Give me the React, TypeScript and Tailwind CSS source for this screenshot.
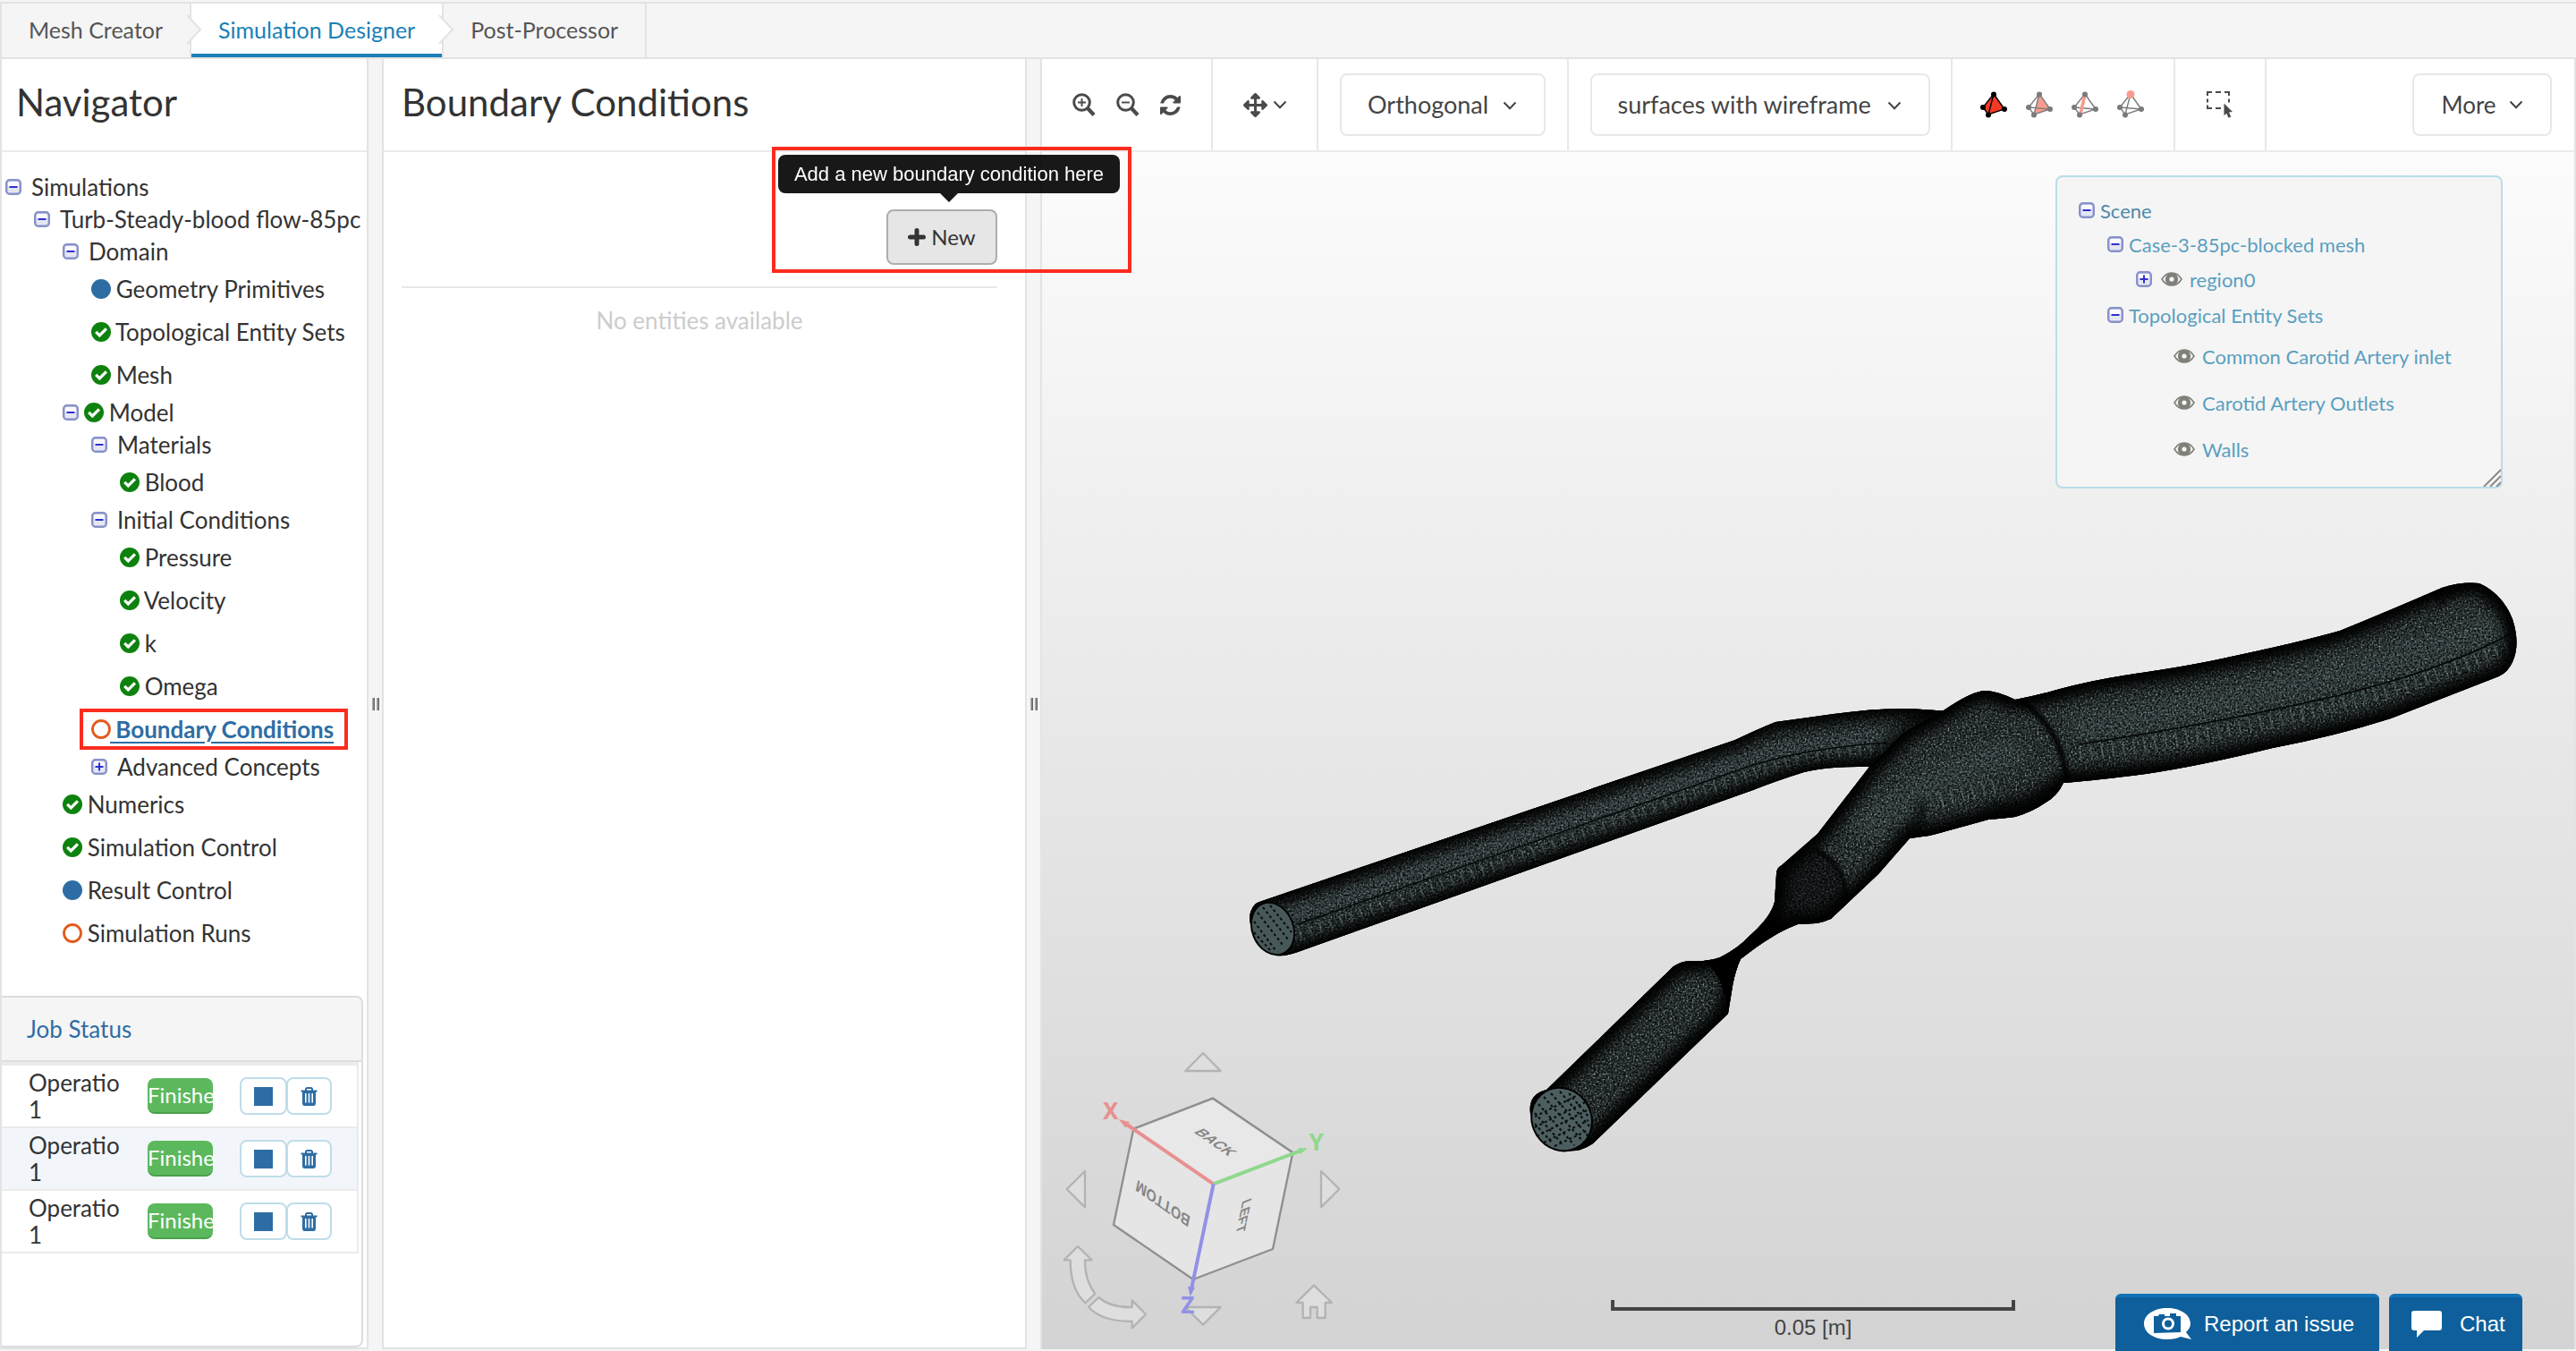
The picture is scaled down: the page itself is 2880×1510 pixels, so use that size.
import type { ReactNode } from "react";
import { FaArrowsAlt } from "react-icons/fa";

type Status = "ok" | "filled" | "open";
type Depth = 0 | 1 | 2 | 3 | 4;
type Node = { label: string; depth: Depth; toggle?: "minus" | "plus"; status?: Status; active?: boolean };

const tree: Node[] = [
  { label: "Simulations", depth: 0, toggle: "minus" },
  { label: "Turb-Steady-blood flow-85pc", depth: 1, toggle: "minus" },
  { label: "Domain", depth: 2, toggle: "minus" },
  { label: "Geometry Primitives", depth: 3, status: "filled" },
  { label: "Topological Entity Sets", depth: 3, status: "ok" },
  { label: "Mesh", depth: 3, status: "ok" },
  { label: "Model", depth: 2, toggle: "minus", status: "ok" },
  { label: "Materials", depth: 3, toggle: "minus" },
  { label: "Blood", depth: 4, status: "ok" },
  { label: "Initial Conditions", depth: 3, toggle: "minus" },
  { label: "Pressure", depth: 4, status: "ok" },
  { label: "Velocity", depth: 4, status: "ok" },
  { label: "k", depth: 4, status: "ok" },
  { label: "Omega", depth: 4, status: "ok" },
  { label: "Boundary Conditions", depth: 3, status: "open", active: true },
  { label: "Advanced Concepts", depth: 3, toggle: "plus" },
  { label: "Numerics", depth: 2, status: "ok" },
  { label: "Simulation Control", depth: 2, status: "ok" },
  { label: "Result Control", depth: 2, status: "filled" },
  { label: "Simulation Runs", depth: 2, status: "open" },
];

const indent: Record<Depth, string> = {
  0: "pl-1",
  1: "pl-9",
  2: "pl-[68px]",
  3: "pl-[100px]",
  4: "pl-[132px]",
};

function ToggleBox({ kind, label }: { kind: "minus" | "plus"; label: string }) {
  return (
    <button type="button" aria-label={(kind === "minus" ? "Collapse " : "Expand ") + label} className="block shrink-0">
      <svg width="18" height="18" viewBox="0 0 18 18" aria-hidden="true">
        <rect x="1.200" y="1.200" width="15.600" height="15.600" rx="3.500" fill="#e4e6f2" stroke="#8791c9" strokeWidth="2.400" />
        <rect x="3" y="3" width="12" height="6" rx="2" fill="#fafaff" />
        <path d={kind === "minus" ? "M4.5 9h9" : "M4.5 9h9M9 4.5v9"} stroke="#2f2fd0" strokeWidth="2" />
      </svg>
    </button>
  );
}

function StatusIcon({ status }: { status: Status }) {
  return (
    <svg width="22" height="22" viewBox="0 0 22 22" className="-mr-px shrink-0" aria-hidden="true">
      {status === "open" && <circle cx="11" cy="11" r="9.5" fill="#fff" stroke="#e25a1c" strokeWidth="2.8" />}
      {status === "filled" && <circle cx="11" cy="11" r="11" fill="#2e6da4" />}
      {status === "ok" && (
        <>
          <circle cx="11" cy="11" r="11" fill="#0e820e" />
          <path d="M5.2 10.8l4.1 4.1 7.6-7.6" fill="none" stroke="#fff" strokeWidth="3.2" />
        </>
      )}
    </svg>
  );
}

function TreeRow({ node }: { node: Node }) {
  const leaf = !node.toggle;
  return (
    <li
      className={
        "relative flex items-center whitespace-nowrap text-[26px] " + indent[node.depth] + (leaf ? " h-12" : " h-9")
      }
    >
      {node.toggle && <ToggleBox kind={node.toggle} label={node.label} />}
      {node.toggle && <span className={node.status ? "w-1.5" : "w-[11px]"} />}
      {node.status && <StatusIcon status={node.status} />}
      <a
        href="#"
        className={
          node.active
            ? "whitespace-pre font-bold text-[#2e6da4] underline decoration-2 underline-offset-4"
            : node.status
              ? "whitespace-pre text-[#333]"
              : "text-[#333]"
        }
      >
        {node.status ? " " + node.label : node.label}
      </a>
      {node.active && <span className="pointer-events-none absolute inset-y-px left-[87px] w-[300px] border-4 border-[#fb2c1d]" />}
    </li>
  );
}

function TabArrow({ fill }: { fill: string }) {
  return (
    <svg width="18" height="34" viewBox="0 0 18 34" className="absolute -right-3.5 top-3 z-10" aria-hidden="true">
      <path d="M1 1L16 17 1 33" fill={fill} stroke="#e3e3e3" strokeWidth="2" />
    </svg>
  );
}

function Tabs() {
  return (
    <nav className="flex h-16 border-y-2 border-l-2 border-[#e3e3e3] bg-[#f5f5f5] text-[25px] text-[#555]">
      <a href="#" className="relative flex items-center border-r-2 border-[#e3e3e3] px-[30px]">
        Mesh Creator
        <TabArrow fill="#f5f5f5" />
      </a>
      <a href="#" className="relative flex items-center border-r-2 border-[#e3e3e3] bg-white px-[30px] text-[#1a80b6]">
        Simulation Designer
        <span className="absolute inset-x-0 bottom-0 h-1 bg-[#1a80b6]" />
        <TabArrow fill="#fff" />
      </a>
      <a href="#" className="flex items-center border-r-2 border-[#e3e3e3] px-[30px]">
        Post-Processor
      </a>
    </nav>
  );
}

function TrashIcon() {
  return (
    <svg width="19" height="21" viewBox="0 0 19 21" aria-hidden="true">
      <path
        d="M6 4V2.6C6 1.7 6.7 1 7.6 1h3.8c.9 0 1.6.7 1.6 1.6V4"
        fill="none"
        stroke="#2e6da4"
        strokeWidth="2"
      />
      <path
        fillRule="evenodd"
        d="M.5 3.4h18v2H17V18c0 1.700-1 3-2.300 3H4.300C3 21 2 19.700 2 18V5.400H.5zM5 7v10.500h1.600V7zm3.700 0v10.500h1.600V7zm3.700 0v10.500H14V7z"
        fill="#2e6da4"
      />
    </svg>
  );
}

function JobStatus() {
  return (
    <section className="mr-1 h-[393px] rounded-r-lg border-2 border-l-0 border-[#ddd] bg-white">
      <h2 className="flex h-[70px] items-center rounded-tr-md bg-[#f5f5f5] pl-7 text-[26px]">
        <a href="#" className="text-[#2e6da4]">
          Job Status
        </a>
      </h2>
      <div className="border-t-2 border-[#ddd] pr-[3px]">
        <table className="w-full border-separate border-spacing-0 border-r-2 border-t-4 border-[#ebebeb] text-[26px] leading-[30px] text-[#333]">
          <tbody>
            {[1, 2, 3].map((n) => (
              <tr key={n} className={n === 2 ? "bg-[#f2f6fb]" : "bg-white"}>
                <td className="h-[70px] w-[163px] border-b-2 border-[#ebebeb] pl-[30px]">
                  Operatio
                  <br />1
                </td>
                <td className="w-[103px] border-b-2 border-[#ebebeb]">
                  <span className="flex h-10 w-[73px] items-center rounded-lg border-b-2 border-[#4ba04b] bg-[#5cb85c] text-2xl text-white">
                    Finishe
                  </span>
                </td>
                <td className="border-b-2 border-[#ebebeb]">
                  <div className="flex">
                    <button
                      type="button"
                      aria-label="Stop job"
                      className="flex h-[42px] w-[53px] items-center justify-center rounded-lg border-2 border-[#bfdde9] bg-white"
                    >
                      <span className="h-[21px] w-[21px] bg-[#2e6da4]" />
                    </button>
                    <button
                      type="button"
                      aria-label="Delete job"
                      className="-ml-px flex h-[42px] w-[51px] items-center justify-center rounded-lg border-2 border-[#bfdde9] bg-white"
                    >
                      <TrashIcon />
                    </button>
                  </div>
                </td>
              </tr>
            ))}
          </tbody>
        </table>
      </div>
    </section>
  );
}

function Navigator() {
  return (
    <aside className="flex w-[412px] shrink-0 flex-col border-x-2 border-b-2 border-[#e3e3e3] bg-white">
      <h1 className="flex h-[104px] items-center border-b-2 border-[#ebebeb] pb-1.5 pl-4 text-[42px] text-[#333]">Navigator</h1>
      <ul className="flex-1 pt-[21px]">
        {tree.map((node) => (
          <TreeRow key={node.label} node={node} />
        ))}
      </ul>
      <JobStatus />
    </aside>
  );
}

function Splitter() {
  return (
    <div className="flex w-[15px] shrink-0 items-center justify-center gap-0.5 bg-[#f5f5f5]">
      <span className="h-3.5 w-[3px] bg-linear-to-r from-[#bbb] to-[#555]" />
      <span className="h-3.5 w-[3px] bg-linear-to-r from-[#bbb] to-[#555]" />
    </div>
  );
}

function BoundaryPanel() {
  return (
    <section className="w-[721px] shrink-0 border-x-2 border-b-2 border-[#e3e3e3] bg-white text-[#333]">
      <h1 className="flex h-[104px] items-center border-b-2 border-[#ebebeb] pb-1.5 pl-5 text-[42px]">Boundary Conditions</h1>
      <div className="pl-5 pr-[31px]">
        <div className="flex h-[152px] items-end justify-end border-b-2 border-[#e8e8e8] pb-6">
          <div className="relative">
            <button
              type="button"
              aria-describedby="new-tip"
              className="flex h-[62px] w-[124px] items-center justify-center gap-1.5 rounded-lg border-2 border-[#adadad] bg-[#e6e6e6] text-2xl"
            >
              <svg width="20" height="20" viewBox="0 0 20 20" aria-hidden="true">
                <path d="M10 2.500v15M2.500 10h15" stroke="#333" strokeWidth="5" strokeLinecap="round" />
              </svg>
              New
            </button>
            <div className="absolute bottom-[70px] -left-[121px] z-20 flex flex-col items-center opacity-90">
              <div
                id="new-tip"
                role="tooltip"
                className="flex h-[43px] w-[382px] items-center justify-center whitespace-nowrap rounded-lg bg-black font-['Liberation_Sans',Arial,sans-serif] text-[22px] text-white"
              >
                Add a new boundary condition here
              </div>
              <span className="h-0 w-0 border-x-10 border-t-10 border-x-transparent border-t-black" />
            </div>
            <span className="pointer-events-none absolute -left-[128px] -top-[70px] z-30 h-[141px] w-[402px] border-4 border-[#fb2c1d]" />
          </div>
        </div>
        <p className="pt-4 text-center text-[26px] leading-10 text-[#ccc]">No entities available</p>
      </div>
    </section>
  );
}

function Chevron() {
  return (
    <svg width="16" height="10" viewBox="0 0 16 10" aria-hidden="true" className="shrink-0">
      <path d="M1.500 1.500L8 8.200 14.500 1.500" fill="none" stroke="#444" strokeWidth="2" />
    </svg>
  );
}

function Magnifier({ plus }: { plus: boolean }) {
  return (
    <svg width="26" height="26" viewBox="0 0 26 26" aria-hidden="true">
      <circle cx="10.500" cy="10.500" r="8.800" fill="none" stroke="#4a4a4a" strokeWidth="3" />
      <path d="M17 17l7 7.500" stroke="#4a4a4a" strokeWidth="4.200" />
      <path d={plus ? "M6 10.500h9M10.500 6v9" : "M6 10.500h9"} stroke="#4a4a4a" strokeWidth="1.900" />
    </svg>
  );
}

function RefreshIcon() {
  return (
    <svg width="23" height="23" viewBox="0 0 1536 1536" aria-hidden="true" fill="#4a4a4a">
      <path d="M1511 928q0 5-1 7-64 268-268 434.500t-478 166.500q-146 0-282.500-55t-243.500-157l-129 129q-19 19-45 19t-45-19-19-45v-448q0-26 19-45t45-19h448q26 0 45 19t19 45-19 45l-137 137q71 66 161 102t187 36q134 0 250-65t186-179q11-17 53-117 8-23 30-23h192q13 0 22.500 9.500t9.500 22.500zm25-800v448q0 26-19 45t-45 19h-448q-26 0-45-19t-19-45 19-45l138-138q-148-137-349-137-134 0-250 65t-186 179q-11 17-53 117-8 23-30 23h-199q-13 0-22.500-9.500t-9.500-22.500v-7q65-268 270-434.500t480-166.500q146 0 284 55.500t245 156.500l130-129q19-19 45-19t45 19 19 45z" />
    </svg>
  );
}

function Tetra({ mode }: { mode: "volume" | "face" | "edge" | "node" }) {
  const dot = mode === "volume" ? "#000" : "#7a7a7a";
  return (
    <svg width="31" height="32" viewBox="0 0 31 32" aria-hidden="true">
      {mode === "volume" && <path d="M15 4L3 19l6 8 18-6z" fill="#f23a25" />}
      {mode === "face" && <path d="M15 4L9 27l18-6z" fill="#f99b90" />}
      <path
        d={mode === "volume" ? "M15 4L3 19l6 8 18-6zM15 4L9 27" : "M15 4L3 19l6 8 18-6zM15 4L9 27M3 19l24 2"}
        fill="none"
        stroke={dot}
        strokeWidth="1.400"
      />
      {mode === "edge" && <path d="M15 5L10 26" stroke="#f99b90" strokeWidth="3.600" />}
      <circle cx="3" cy="19" r="3" fill={dot} />
      <circle cx="9" cy="27.500" r="3" fill={dot} />
      <circle cx="27" cy="21" r="3" fill={dot} />
      <circle cx="15" cy="4.500" r={mode === "node" ? 4.5 : 3} fill={mode === "node" ? "#f99b90" : dot} />
    </svg>
  );
}

function Dropdown({ label, value, width }: { label: string; value: string; width: string }) {
  return (
    <div className={"relative " + width}>
      <select
        aria-label={label}
        className="h-[70px] w-full appearance-none rounded-lg border-2 border-[#e8e8e8] bg-white pl-[29px] text-[27px] text-[#444]"
      >
        <option>{value}</option>
      </select>
      <span className="pointer-events-none absolute right-8 top-[31px]">
        <Chevron />
      </span>
    </div>
  );
}

function Cell({ children, className }: { children: ReactNode; className: string }) {
  return <div className={"flex items-center border-r-2 border-[#e8e8e8] " + className}>{children}</div>;
}

function Toolbar() {
  return (
    <div className="flex h-[104px] border-b-2 border-[#ebebeb] bg-white">
      <Cell className="w-[191px] gap-[23px] pl-[34px]">
        <button type="button" aria-label="Zoom in">
          <Magnifier plus />
        </button>
        <button type="button" aria-label="Zoom out">
          <Magnifier plus={false} />
        </button>
        <button type="button" aria-label="Reset view">
          <RefreshIcon />
        </button>
      </Cell>
      <Cell className="w-[118px] justify-center">
        <button type="button" aria-label="Move" className="flex items-center gap-1.5">
          <FaArrowsAlt size={27} color="#4a4a4a" />
          <Chevron />
        </button>
      </Cell>
      <Cell className="w-[280px] justify-center">
        <Dropdown label="Projection" value="Orthogonal" width="w-[230px]" />
      </Cell>
      <Cell className="w-[429px] justify-center">
        <Dropdown label="Render mode" value="surfaces with wireframe" width="w-[380px]" />
      </Cell>
      <Cell className="w-[249px] gap-5 pl-[31px]">
        <button type="button" aria-label="Pick volumes">
          <Tetra mode="volume" />
        </button>
        <button type="button" aria-label="Pick faces">
          <Tetra mode="face" />
        </button>
        <button type="button" aria-label="Pick edges">
          <Tetra mode="edge" />
        </button>
        <button type="button" aria-label="Pick nodes">
          <Tetra mode="node" />
        </button>
      </Cell>
      <Cell className="w-[102px] justify-center">
        <button type="button" aria-label="Box select">
          <svg width="30" height="30" viewBox="0 0 30 30" aria-hidden="true">
            <path
              d="M1 5V1h5M10 1h6M20 1h5v4M1 8.500v4M25 8.500v4M1 15.500V19h5M10 19h6"
              fill="none"
              stroke="#4a4a4a"
              strokeWidth="2"
            />
            <path d="M19.500 13.500l9.500 9.500-4 .400 2.300 5-2.800 1.300-2.200-5-2.800 2.600z" fill="#4a4a4a" />
          </svg>
        </button>
      </Cell>
      <div className="flex flex-1 items-center justify-end pr-[25px]">
        <button
          type="button"
          aria-haspopup="menu"
          className="flex h-[70px] w-[156px] items-center justify-center gap-3.5 rounded-lg border-2 border-[#e8e8e8] bg-white text-[26px] text-[#444]"
        >
          More
          <Chevron />
        </button>
      </div>
    </div>
  );
}

function Eye() {
  return (
    <svg width="24" height="16" viewBox="0 0 24 16" className="shrink-0" aria-hidden="true">
      <path d="M1 8C4 3 8 1 12 1s8 2 11 7c-3 5-7 7-11 7S4 13 1 8z" fill="#f5f5f5" stroke="#80807a" strokeWidth="1.600" />
      <circle cx="12" cy="8" r="7.200" fill="#80807a" />
      <circle cx="12" cy="8" r="2.600" fill="#f5f5f5" />
    </svg>
  );
}

function SceneRow(props: { label: string; toggle?: "minus" | "plus"; eye?: boolean; className: string }) {
  return (
    <li className={"flex items-center " + props.className}>
      {props.toggle && <ToggleBox kind={props.toggle} label={props.label} />}
      {props.eye && (
        <button type="button" aria-label={"Toggle visibility of " + props.label} className={props.toggle ? "ml-2.5" : ""}>
          <Eye />
        </button>
      )}
      <a href="#" className={props.eye ? "ml-2" : "ml-1.5"}>
        {props.label}
      </a>
    </li>
  );
}

function ScenePanel() {
  return (
    <div className="absolute right-20 top-[26px] h-[350px] w-[500px] rounded-lg border-2 border-[#b9dde9] bg-[#f5f5f5] text-[22px] text-[#5a9fc0]">
      <ul className="whitespace-nowrap pt-[18px]">
        <SceneRow label="Scene" toggle="minus" className="h-[38px] pl-6 text-[#4f8aa8]" />
        <SceneRow label="Case-3-85pc-blocked mesh" toggle="minus" className="h-[38px] pl-14" />
        <SceneRow label="region0" toggle="plus" eye className="h-10 pl-[88px]" />
        <SceneRow label="Topological Entity Sets" toggle="minus" className="h-10 pl-14" />
        <SceneRow label="Common Carotid Artery inlet" eye className="h-[52px] pl-[130px]" />
        <SceneRow label="Carotid Artery Outlets" eye className="h-[52px] pl-[130px]" />
        <SceneRow label="Walls" eye className="h-[52px] pl-[130px]" />
      </ul>
      <svg width="20" height="20" viewBox="0 0 20 20" className="absolute bottom-0 right-0" aria-hidden="true">
        <path d="M1 20L20 1M8 20L20 8M15 20l5-5" stroke="#8a8a8a" strokeWidth="2" />
      </svg>
    </div>
  );
}

const LEFT_TUBE =
  "M28 388L560 207Q585 195 605 187L670 178Q720 171 755 172L800 175L770 237L708 237Q665 236 637 243Q605 253 580 263L71 444Q58 449 47 448Q12 420 18 400Q21 390 28 388Z";
const BODY =
  "M793 174Q825 152 840 152Q852 152 873 162Q895 158 923 150Q960 140 1007 133Q1070 124 1114 114Q1190 98 1236 85Q1290 63 1350 37Q1372 30 1392 32Q1418 44 1429 72Q1438 100 1429 120Q1423 133 1411 137L1293 183Q1230 203 1161 216Q1080 236 1019 245Q965 252 927 255Q920 270 907 277Q893 287 873 293Q858 295 843 296Q800 308 777 314L755 317L720 357L667 407Q658 411 650 412L630 413Q612 420 600 428Q585 437 566 452Q560 465 557 482L552 513L401 658Q386 668 372 666Q338 655 331 625Q328 603 349 598L491 460Q500 454 510 454Q530 455 543 450Q563 440 576 426Q600 405 604 388L606 357Q606 350 612 347L652 312L710 237L747 200Q770 185 793 174Z";

function Vessel() {
  return (
    <svg viewBox="0 0 1480 700" className="absolute left-[215px] top-[450px] w-[1480px]" role="img" aria-label="Artery mesh">
      <defs>
        <clipPath id="tube-clip">
          <path d={LEFT_TUBE} />
        </clipPath>
        <clipPath id="body-clip">
          <path d={BODY} />
        </clipPath>
        <filter id="soft" x="-10%" y="-10%" width="120%" height="120%">
          <feGaussianBlur stdDeviation="7" />
        </filter>
        <filter id="soft-thin" x="-10%" y="-10%" width="120%" height="120%">
          <feGaussianBlur stdDeviation="2" />
        </filter>
        <filter id="mesh-light" x="0" y="0" width="100%" height="100%">
          <feTurbulence type="fractalNoise" baseFrequency="0.5" numOctaves="2" seed="4" />
          <feColorMatrix values="0 0 0 0 0.42  0 0 0 0 0.52  0 0 0 0 0.53  2.800 0 0 0 -1.250" />
        </filter>
        <filter id="mesh-dark" x="0" y="0" width="100%" height="100%">
          <feTurbulence type="fractalNoise" baseFrequency="0.45" numOctaves="2" seed="9" />
          <feColorMatrix values="0 0 0 0 0  0 0 0 0 0  0 0 0 0 0  0 3 0 0 -1.200" />
        </filter>
      </defs>

      <g clipPath="url(#tube-clip)">
        <rect width="1480" height="700" fill="#232b2c" />
        <rect width="820" height="470" filter="url(#mesh-light)" opacity=".75" />
        <path d="M55 405L580 228Q640 206 770 200" fill="none" stroke="#5c6e70" strokeOpacity=".3" strokeWidth="18" filter="url(#soft-thin)" />
        <rect width="820" height="470" filter="url(#mesh-dark)" opacity=".8" />
        <path d="M62 430L580 245Q640 222 730 217" fill="none" stroke="#7b9394" strokeOpacity=".4" strokeWidth="13" strokeDasharray="2 10" />
        <path d="M71 413L580 235Q647 215 730 210" fill="none" stroke="#050808" strokeWidth="1.500" />
        <path d={LEFT_TUBE} fill="none" stroke="#000" strokeWidth="20" filter="url(#soft)" />
        <path d={LEFT_TUBE} fill="none" stroke="#000" strokeWidth="3" />
        <path d="M790 170Q750 195 735 215T705 245" fill="none" stroke="#000" strokeWidth="22" strokeOpacity=".7" filter="url(#soft)" />
      </g>

      <g clipPath="url(#body-clip)">
        <rect width="1480" height="700" fill="#232b2c" />
        <rect x="320" width="1140" height="690" filter="url(#mesh-light)" opacity=".75" />
        <path d="M935 195Q1100 170 1240 132T1425 75" fill="none" stroke="#5c6e70" strokeOpacity=".35" strokeWidth="34" filter="url(#soft)" />
        <path d="M700 310Q770 250 880 215" fill="none" stroke="#5c6e70" strokeOpacity=".35" strokeWidth="34" filter="url(#soft)" />
        <rect x="320" width="1140" height="690" filter="url(#mesh-dark)" opacity=".8" />
        <path d="M945 223Q1100 202 1225 170T1435 98" fill="none" stroke="#7b9394" strokeOpacity=".35" strokeWidth="17" strokeDasharray="2 10" />
        <path d="M790 275L850 258" fill="none" stroke="#7b9394" strokeOpacity=".35" strokeWidth="18" strokeDasharray="2 10" />
        <path d="M944 212Q1090 190 1218 161T1430 87" fill="none" stroke="#050808" strokeWidth="1.600" />
        <path d={BODY} fill="none" stroke="#000" strokeWidth="26" filter="url(#soft)" />
        <path d={BODY} fill="none" stroke="#000" strokeWidth="4" />
        <path d="M1340 40L1392 30L1345 62Z" fill="#000" fillOpacity=".4" filter="url(#soft-thin)" />
        <path d="M876 160Q905 180 920 210Q930 235 933 262" fill="none" stroke="#000" strokeWidth="6" filter="url(#soft-thin)" />
        <path d="M850 275Q885 268 915 250L930 300H830Z" fill="#000" fillOpacity=".6" filter="url(#soft)" />
        <path d="M772 275Q768 300 752 320" fill="none" stroke="#000" strokeWidth="14" strokeOpacity=".7" filter="url(#soft)" />
        <path d="M600 350L650 325Q690 350 684 395L650 420L600 430Z" fill="#000" fillOpacity=".5" filter="url(#soft-thin)" />
        <path d="M650 330Q690 350 683 395" fill="none" stroke="#000" strokeWidth="4" filter="url(#soft-thin)" />
        <path d="M610 400Q605 425 560 455L525 453Q545 470 552 505L575 450Z" fill="#000" />
      </g>

      <g stroke="#000" strokeWidth="2">
        <ellipse cx="43" cy="418" rx="23" ry="30" transform="rotate(-22 43 418)" fill="#485859" />
        <ellipse cx="366" cy="631" rx="33" ry="36" transform="rotate(-30 366 631)" fill="#4d5e60" />
      </g>
      <g stroke="#0b0f0f" strokeWidth="2.200" strokeDasharray="3 3">
        <path d="M26 400L54 436M32 394L60 430M40 392L64 422M22 410L46 442M22 422L40 442" />
        <path d="M346 606L390 656M354 602L396 650M364 600L398 640M340 614L380 660M336 624L368 660M336 636L356 658M374 602L396 628" />
        <path d="M336 640L392 612M338 650L396 620M346 657L396 632M336 628L384 604M358 661L394 644" />
      </g>
    </svg>
  );
}

function ViewCube() {
  return (
    <svg width="380" height="360" viewBox="0 0 1140 1080" className="absolute -bottom-[3px] -left-[5px]" role="img" aria-label="View cube">
      <g fill="#dedede" stroke="#b3b3b3" strokeWidth="7" strokeLinejoin="round">
        <path d="M555 78L614 138H496Z" />
        <path d="M555 989L496 930H614Z" />
        <path d="M98 534L159 474V595Z" />
        <path d="M1012 534L951 474V595Z" />
        <path d="M135 726L182 772H159Q158 840 193 885L160 916Q110 870 110 772H89Z" />
        <path d="M205 897Q245 932 317 930V907L363 954 317 1000V977Q220 980 171 930Z" />
        <path d="M927 857L987 915H965V966H938V930H915V966H890V915H868Z" />
      </g>
      <path d="M588 230L856 412 789 735 522 837 255 654 322 332Z" fill="#e5e5e5" stroke="#8f8f8f" strokeWidth="7" strokeLinejoin="round" />
      <path d="M588 230L856 412 590 517 322 332Z" fill="#e8e8e8" />
      <path d="M322 332L588 230 856 412" fill="none" stroke="#8f8f8f" strokeWidth="7" />
      <g fill="#858585" fontFamily="'Liberation Sans', Arial, sans-serif" fontSize="52" fontWeight="700">
        <text transform="matrix(.78 .54 -.93 .37 522 343)">BACK</text>
        <text transform="matrix(-.8 -.56 .21 -.98 514 628)">BOTTOM</text>
        <text transform="matrix(-.18 .86 -.86 .34 688 574)">LEFT</text>
      </g>
      <g strokeWidth="12">
        <path d="M590 517L300 318" stroke="#e89090" />
        <path d="M590 517L880 406" stroke="#8fd88f" />
        <path d="M590 517L517 865" stroke="#9191e8" />
      </g>
      <path d="M272 300L308 309 296 329Z" fill="#e89090" />
      <path d="M905 397L873 397 881 418Z" fill="#8fd88f" />
      <path d="M512 894L504 860 528 864Z" fill="#9191e8" />
      <g fontFamily="'Noto Sans', sans-serif" fontSize="78" fontWeight="700" textAnchor="middle">
        <text x="245" y="299" fill="#e89090">X</text>
        <text x="935" y="404" fill="#8fd88f">Y</text>
        <text x="503" y="951" fill="#9191e8">Z</text>
      </g>
    </svg>
  );
}

function Viewer() {
  return (
    <main className="flex min-w-0 flex-1 flex-col border-x-2 border-[#e3e3e3]">
      <Toolbar />
      <div className="relative flex-1 bg-linear-to-b from-[#fcfcfc] to-[#d3d3d3] font-['Liberation_Sans',Arial,sans-serif]">
        <Vessel />
        <div className="font-['Lato',sans-serif]">
          <ScenePanel />
        </div>
        <ViewCube />
        <div className="absolute bottom-[7px] left-[636px] w-[452px] text-center text-2xl text-[#444]">
          <div className="h-3 border-4 border-t-0 border-[#444]" />
          <p className="pt-0.5 leading-[34px]">0.05 [m]</p>
        </div>
        <div className="absolute -bottom-[2px] right-[58px] flex gap-[11px] text-2xl text-white">
          <button type="button" className="flex h-16 w-[295px] items-center gap-3.5 rounded-t-md border-t-4 border-[#1272b8] bg-[#0e5f9b] pl-[31px]">
            <svg width="54" height="38" viewBox="0 0 54 38" aria-hidden="true">
              <path d="M27 1C12 1 1 8.500 1 18.500S12 36 27 36c6 0 11-1 15-3l12 3-6-8c3-3 5-6 5-9.500C53 8.500 42 1 27 1z" fill="#fff" />
              <path d="M12 10h5l1-2h6v2h6V7h7v3h5v18l-30 1z" fill="#0e5f9b" />
              <circle cx="28" cy="18.500" r="7" fill="#fff" />
              <circle cx="28" cy="18.500" r="4" fill="#0e5f9b" />
            </svg>
            Report an issue
          </button>
          <button type="button" className="flex h-16 w-[149px] items-center gap-5 rounded-t-md border-t-4 border-[#1272b8] bg-[#0e5f9b] pl-[25px]">
            <svg width="34" height="30" viewBox="0 0 34 30" aria-hidden="true">
              <path d="M3 0h28q3 0 3 3v16q0 3-3 3H14l-8 8V22H3q-3 0-3-3V3q0-3 3-3z" fill="#fff" />
            </svg>
            Chat
          </button>
        </div>
      </div>
    </main>
  );
}

export default function App() {
  return (
    <div className="flex min-h-screen flex-col bg-[#f5f5f5] pt-0.5 font-['Lato',sans-serif]">
      <Tabs />
      <div className="flex flex-1 pb-0.5">
        <Navigator />
        <Splitter />
        <BoundaryPanel />
        <Splitter />
        <Viewer />
      </div>
    </div>
  );
}
